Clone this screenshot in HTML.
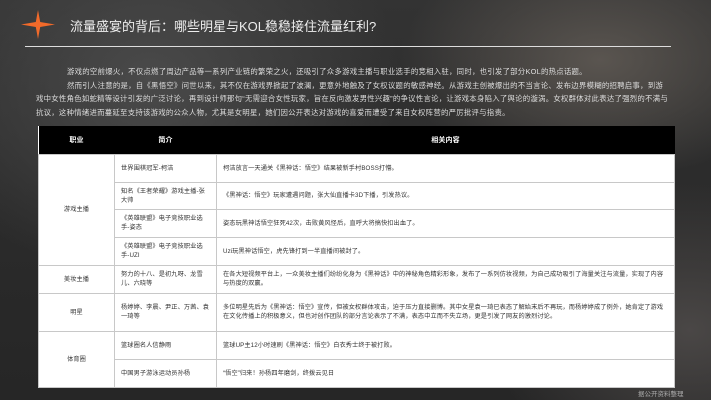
<!DOCTYPE html>
<html><head><meta charset="utf-8"><style>
*{margin:0;padding:0;box-sizing:border-box}
body{width:711px;height:400px;overflow:hidden;position:relative;font-family:"Liberation Sans","Noto Sans CJK SC",sans-serif;
background:radial-gradient(ellipse 200px 120px at 600px 60px,#5a5550 0%,rgba(60,58,56,0) 100%),radial-gradient(ellipse 250px 200px at 150px 80px,#4a4a4a 0%,rgba(40,40,40,0) 100%),radial-gradient(ellipse 200px 150px at 690px 330px,#4a4746 0%,rgba(40,40,40,0) 100%),linear-gradient(180deg,#333 0%,#2b2b2b 50%,#262626 100%);}
.t{position:absolute;left:70px;top:16px;font-size:13px;color:#eee;white-space:nowrap}
.ln{position:absolute;left:25px;top:46px;width:646px;height:1px;background:#ddd}
.p{position:absolute;left:36px;top:65px;width:634px;font-size:7.4px;line-height:13.5px;color:#ddd;letter-spacing:0.25px}
.p div{text-indent:31px;}
table{position:absolute;left:38px;top:126px;width:637px;border-collapse:collapse;background:#fff;font-size:6.2px;color:#333;letter-spacing:0.1px}
th{background:#000;color:#fff;height:28px;font-weight:bold;font-size:7px}
td{border:1px solid #c8c8c8;padding:0 6px;line-height:9px}
td.c{text-align:center}
.cap{position:absolute;left:638px;top:388px;font-size:6.5px;color:#aaa}
</style></head><body>
<svg style="position:absolute;left:21px;top:10px" width="34" height="29" viewBox="0 0 34 29"><path d="M17 0 L19.2 12 L34 14.5 L19.2 17 L17 29 L14.8 17 L0 14.5 L14.8 12 Z" fill="#f26a2a"/></svg>
<div class="t">流量盛宴的背后：哪些明星与KOL稳稳接住流量红利?</div>
<div class="ln"></div>
<div class="p"><div>游戏的空前爆火，不仅点燃了周边产品等一系列产业链的繁荣之火，还吸引了众多游戏主播与职业选手的竞相入驻，同时，也引发了部分KOL的热点话题。</div><div>然而引人注意的是，自《黑悟空》问世以来，其不仅在游戏界掀起了波澜，更意外地触及了女权议题的敏感神经。从游戏主创被爆出的不当言论、发布边界模糊的招聘启事，到游戏中女性角色如蛇精等设计引发的广泛讨论，再到设计师那句“无需迎合女性玩家，旨在反向激发男性兴趣”的争议性言论，让游戏本身陷入了舆论的漩涡。女权群体对此表达了强烈的不满与抗议，这种情绪进而蔓延至支持该游戏的公众人物，尤其是女明星，她们因公开表达对游戏的喜爱而遭受了来自女权阵营的严厉批评与指责。</div></div>
<table>
<tr><th style="width:76px">职业</th><th style="width:102px">简介</th><th>相关内容</th></tr>
<tr style="height:28px"><td class="c" rowspan="4">游戏主播</td><td>世界围棋冠军-柯洁</td><td>柯洁放言一天通关《黑神话：悟空》结果被新手村BOSS打懵。</td></tr>
<tr style="height:27px"><td>知名《王者荣耀》游戏主播-张大帅</td><td>《黑神话：悟空》玩家遭遇问题，张大仙直播卡3D下播，引发热议。</td></tr>
<tr style="height:28px"><td>《英雄联盟》电子竞技职业选手-姿态</td><td>姿态玩黑神话悟空狂死42次，击败黄风怪后，直呼大将搞快扣出血了。</td></tr>
<tr style="height:28px"><td>《英雄联盟》电子竞技职业选手-UZI</td><td>Uzi玩黑神话悟空，虎先锋打到一半直播间被封了。</td></tr>
<tr style="height:28px"><td class="c">美妆主播</td><td>努力的十八、是初九呀、龙雪儿、六晓等</td><td>在各大短视频平台上，一众美妆主播们纷纷化身为《黑神话》中的神秘角色精彩形象，发布了一系列仿妆视频，为自己成功吸引了海量关注与流量，实现了内容与热度的双赢。</td></tr>
<tr style="height:38px"><td class="c">明星</td><td>杨婷婷、李晨、尹正、万茜、袁一琦等</td><td>多位明星先后为《黑神话：悟空》宣传，但被女权群体攻击，迫于压力直接删博。其中女星袁一琦已表态了解始末后不再玩，而杨婷婷成了例外，她肯定了游戏在文化传播上的积极意义，但也对创作团队的部分言论表示了不满，表态中立而不失立场，更是引发了网友的激烈讨论。</td></tr>
<tr style="height:28px"><td class="c" rowspan="2">体育圈</td><td>篮球圈名人信静雨</td><td>篮球UP主12小时速刷《黑神话：悟空》白衣秀士终于被打败。</td></tr>
<tr style="height:28px"><td>中国男子游泳运动员孙杨</td><td>“悟空”归来！孙杨四年磨剑，终拨云见日</td></tr>
</table>
<div class="cap">据公开资料整理</div>
</body></html>
